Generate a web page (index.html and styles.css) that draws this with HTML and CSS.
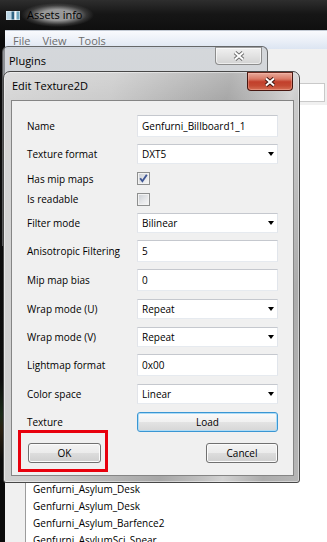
FILE: index.html
```html
<!DOCTYPE html>
<html>
<head>
<meta charset="utf-8">
<title>Assets info</title>
<link rel="stylesheet" href="styles.css">
</head>
<body>
<div class="main">
  <div class="main-title">
    <svg class="app-icon" width="14" height="9" viewBox="0 0 14 9">
      <rect x="0" y="0" width="14" height="9" fill="#e9f1f5"/>
      <rect x="0.5" y="0.5" width="5" height="8" fill="#bcd7e6"/>
      <rect x="5.5" y="0.5" width="3" height="8" fill="#2f6584"/>
      <rect x="8.5" y="0.5" width="2" height="8" fill="#f7fafb"/>
      <rect x="10.5" y="0.5" width="3" height="8" fill="#6fa6bd"/>
    </svg>
    <span class="main-caption">Assets info</span>
  </div>
  <div class="main-client">
    <div class="menubar">
      <span class="menu-item">File</span>
      <span class="menu-item">View</span>
      <span class="menu-item">Tools</span>
    </div>
    <div class="toolbar"></div>
    <div class="search-row"><div class="search-box"></div></div>
    <div class="asset-area">
      <ul class="asset-list">
        <li>Genfurni_Asylum_Desk</li>
        <li>Genfurni_Asylum_Desk</li>
        <li>Genfurni_Asylum_Barfence2</li>
        <li>Genfurni_AsylumSci_Spear</li>
      </ul>
    </div>
  </div>
</div>

<div class="win plugins">
  <div class="win-title">
    <span class="caption">Plugins</span>
    <span class="close-btn inactive">
      <svg width="12" height="10" viewBox="0 0 12 10">
        <path d="M2 1.5L10 8.5M10 1.5L2 8.5" stroke="#6b6b6b" stroke-width="3.8" fill="none"/>
        <path d="M2 1.5L10 8.5M10 1.5L2 8.5" stroke="#ffffff" stroke-width="2" fill="none"/>
      </svg>
    </span>
  </div>
  <div class="win-client"></div>
</div>

<div class="win dialog">
  <div class="win-title dlg-title">
    <span class="caption">Edit Texture2D</span>
    <span class="close-btn active">
      <svg width="12" height="10" viewBox="0 0 12 10">
        <path d="M2 1.5L10 8.5M10 1.5L2 8.5" stroke="#3d140e" stroke-width="3.8" fill="none"/>
        <path d="M2 1.5L10 8.5M10 1.5L2 8.5" stroke="#ffffff" stroke-width="2" fill="none"/>
      </svg>
    </span>
  </div>
  <div class="panel">
    <div class="form">
      <span class="lbl">Name</span>
      <div class="field">Genfurni_Billboard1_1</div>

      <span class="lbl">Texture format</span>
      <div class="field select"><span>DXT5</span><span class="arrow"></span></div>

      <span class="lbl">Has mip maps</span>
      <div class="check-cell"><span class="check">
        <svg width="11" height="11" viewBox="0 0 11 11"><path d="M2.2 5.2L4.4 8.2L8.8 1.8" stroke="#3f5694" stroke-width="1.9" fill="none"/></svg>
      </span></div>

      <span class="lbl">Is readable</span>
      <div class="check-cell"><span class="check"></span></div>

      <span class="lbl">Filter mode</span>
      <div class="field select"><span>Bilinear</span><span class="arrow"></span></div>

      <span class="lbl">Anisotropic Filtering</span>
      <div class="field">5</div>

      <span class="lbl">Mip map bias</span>
      <div class="field">0</div>

      <span class="lbl">Wrap mode (U)</span>
      <div class="field select"><span>Repeat</span><span class="arrow"></span></div>

      <span class="lbl">Wrap mode (V)</span>
      <div class="field select"><span>Repeat</span><span class="arrow"></span></div>

      <span class="lbl">Lightmap format</span>
      <div class="field">0x00</div>

      <span class="lbl">Color space</span>
      <div class="field select"><span>Linear</span><span class="arrow"></span></div>

      <span class="lbl">Texture</span>
      <button class="btn btn-load">Load</button>
    </div>
    <div class="actions">
      <div class="ok-wrap">
        <button class="btn btn-ok">OK</button>
        <span class="highlight"></span>
      </div>
      <button class="btn btn-cancel">Cancel</button>
    </div>
  </div>
</div>
</body>
</html>
```

FILE: styles.css
```css
* {
  box-sizing: border-box;
  margin: 0;
  padding: 0;
}

html,
body {
  width: 327px;
  height: 542px;
  overflow: hidden;
}

body {
  position: relative;
  background: #0c0c0c;
  font-family: "Open Sans", "Noto Sans", "Liberation Sans", sans-serif;
  font-size: 10px;
  color: #000;
}

/* ---------- Main "Assets info" window ---------- */
.main {
  height: 549px;
  display: flex;
  flex-direction: column;
  background: linear-gradient(180deg, #2e2e2e 0px, #161616 14px, #0b0b0b 40px, #0d0d0d 380px, #1b2a18 415px, #2a1f10 430px, #0b0b0b 460px);
}

.main-title {
  height: 30px;
  flex: none;
  display: flex;
  align-items: center;
  padding-left: 6px;
}

.app-icon {
  flex: none;
  display: block;
}

.main-caption {
  margin-left: 1px;
  padding: 5px 12px 5px 6px;
  font-size: 11px;
  line-height: 14px;
  color: #000;
  background: radial-gradient(closest-side, rgba(175, 175, 175, 0.85) 45%, rgba(110, 110, 110, 0.35) 80%, rgba(60, 60, 60, 0) 100%);
}

.main-client {
  flex: 1;
  margin-left: 5px;
  display: flex;
  flex-direction: column;
  background: #f0f0f0;
}

.menubar {
  height: 19px;
  flex: none;
  display: flex;
  align-items: center;
  padding: 1px 0 0 2px;
  border-top: 1px solid #c3cad4;
  background: linear-gradient(180deg, #f9fafd 0%, #eaeff7 55%, #dce5f2 100%);
}

.menu-item {
  padding: 0 6px;
  font-size: 11px;
  color: #6d6d6d;
}

.toolbar {
  height: 34px;
  flex: none;
}

.search-row {
  height: 19px;
  flex: none;
  display: flex;
  justify-content: flex-end;
  padding-right: 2px;
}

.search-box {
  width: 200px;
  height: 19px;
  background: #fff;
  border: 1px solid #c9c9c9;
}

.asset-area {
  flex: 1;
  display: flex;
  padding: 3px 0 0 20px;
}

.asset-list {
  flex: 1;
  list-style: none;
  background: #fff;
  border-left: 1px solid #9c9c9c;
  display: flex;
  flex-direction: column;
  justify-content: flex-end;
  padding-left: 7px;
}

.asset-list li {
  height: 17px;
  line-height: 17px;
  font-size: 10px;
  white-space: nowrap;
}

/* ---------- Generic windows ---------- */
.win {
  position: absolute;
  display: flex;
  flex-direction: column;
}

.win-title {
  display: flex;
  align-items: flex-start;
  flex: none;
}

.caption {
  font-size: 11px;
  line-height: 14px;
  color: #000;
}

.close-btn {
  margin-left: auto;
  display: flex;
  align-items: center;
  justify-content: center;
  border-radius: 0 0 4px 4px;
}

/* Plugins window */
.plugins {
  left: 2px;
  top: 46px;
  width: 266px;
  height: 200px;
  border: 1px solid rgba(70, 70, 70, 0.75);
  border-radius: 6px 6px 0 0;
  background: linear-gradient(180deg, rgba(200, 204, 209, 0.7), rgba(190, 195, 201, 0.7));
}

.plugins .win-title {
  height: 24px;
  padding-left: 6px;
}

.plugins .caption {
  margin-top: 7px;
}

.close-btn.inactive {
  width: 47px;
  height: 18px;
  margin-right: 5px;
  border: 1px solid #8c8c8c;
  border-top-color: #a0a0a0;
  background: linear-gradient(180deg, #f0f0f0 0%, #e2e2e2 50%, #d2d2d2 100%);
  box-shadow: inset 0 0 0 1px rgba(255, 255, 255, 0.6);
}

.win-client {
  flex: 1;
  margin: 0 7px 7px 7px;
  background: #f0f0f0;
}

/* Edit Texture2D dialog */
.dialog {
  left: 3px;
  top: 71px;
  width: 297px;
  height: 412px;
  border: 1px solid #474747;
  border-radius: 7px 7px 3px 3px;
  background:
    linear-gradient(180deg, rgba(255, 255, 255, 0.18) 0, rgba(255, 255, 255, 0) 28px),
    linear-gradient(100deg, #d6d6d6 0%, #cbcbcb 30%, #b4b4b4 50%, #a7a7a7 62%, #c2c2c2 74%, #d2d2d2 79%, #acacac 90%, #b6b6b6 100%);
  box-shadow: inset 0 0 0 1px rgba(255, 255, 255, 0.45);
}

.dlg-title {
  height: 28px;
  padding-left: 8px;
}

.dlg-title .caption {
  margin-top: 7px;
}

.close-btn.active {
  width: 46px;
  height: 19px;
  margin-right: 6px;
  border: 1px solid #47160f;
  border-top-color: #6b2a20;
  background: linear-gradient(180deg, #e9aa9b 0%, #d97a66 35%, #c23f2b 52%, #c44a33 75%, #d66f55 100%);
  box-shadow: inset 0 0 0 1px rgba(255, 200, 190, 0.35);
}

.panel {
  flex: 1;
  margin: 0 5px 6px 7px;
  background: #f0f0f0;
  border: 1px solid #858585;
  padding: 10px 15px 0 15px;
  display: flex;
  flex-direction: column;
}

.form {
  display: grid;
  grid-template-columns: 110px 141px;
  grid-template-rows: 29px 28px 21px 20px 27px 29px 29px 29px 28px 28px 29px 28px;
  align-items: center;
}

.lbl {
  font-size: 10px;
  white-space: nowrap;
}

.field {
  height: 22px;
  display: flex;
  align-items: center;
  padding: 0 4px;
  background: #fff;
  border: 1px solid;
  border-color: #c5c8ce #e1e5eb #e6eaef #e2e4e9;
  font-size: 10px;
  white-space: nowrap;
}

.select {
  height: 20px;
  justify-content: space-between;
  padding-right: 3px;
}

.arrow {
  width: 0;
  height: 0;
  border-left: 3.5px solid transparent;
  border-right: 3.5px solid transparent;
  border-top: 4px solid #000;
}

.check-cell {
  display: flex;
  align-items: center;
}

.check {
  width: 13px;
  height: 13px;
  display: flex;
  align-items: center;
  justify-content: center;
  border: 1px solid #8e8f8f;
  background: linear-gradient(135deg, #c9cdd3 0%, #e6e7e9 55%, #f7f7f7 100%);
  box-shadow: inset 0 0 0 1px #f2f2f2;
}

.btn {
  height: 20px;
  border: 1px solid #707070;
  border-radius: 3px;
  background: linear-gradient(180deg, #f3f3f3 0%, #ebebeb 50%, #dddddd 51%, #cfcfcf 100%);
  box-shadow: inset 0 0 0 1px #fbfbfb;
  font-family: inherit;
  font-size: 10px;
  color: #000;
  display: flex;
  align-items: center;
  justify-content: center;
}

.btn-load {
  width: 141px;
  border-color: #3a96d3;
  box-shadow: inset 0 0 0 1px #aedcf6;
  background: linear-gradient(180deg, #fbfbfb 0%, #f0f0f0 50%, #e3e3e3 51%, #d6d6d6 100%);
}

.actions {
  margin-top: 3px;
  height: 28px;
  display: flex;
  align-items: center;
  justify-content: space-between;
  padding-left: 1px;
}

.ok-wrap {
  position: relative;
  width: 73px;
  height: 20px;
}

.btn-ok {
  width: 73px;
}

.btn-cancel {
  width: 72px;
}

.highlight {
  position: absolute;
  left: -10px;
  top: -13px;
  width: 90px;
  height: 42px;
  border: 3px solid #e8000d;
}
```
